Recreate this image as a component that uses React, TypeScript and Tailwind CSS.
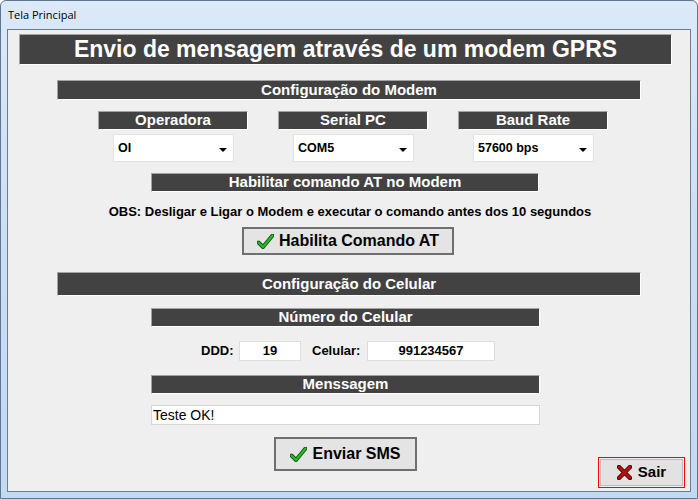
import React from 'react';

const font = "font-['Liberation_Sans',Arial,sans-serif]";

function Bar({ className, children }: { className: string; children: React.ReactNode }) {
  return (
    <div
      className={`flex items-center justify-center bg-[#424242] border-t border-l border-[#a3a3a3] border-b-white border-r-white border-b border-r text-white font-bold ${className}`}
    >
      {children}
    </div>
  );
}

function Check() {
  return (
    <svg width="17" height="15" viewBox="0 0 17 15" className="shrink-0">
      <path d="M1.5 8.5 L6 13 L15.5 1.5" fill="none" stroke="#0d5e0d" strokeWidth="4" strokeLinecap="round" strokeLinejoin="round" />
      <path d="M1.5 8.5 L6 13 L15.5 1.5" fill="none" stroke="#2fb52f" strokeWidth="2" strokeLinecap="round" strokeLinejoin="round" />
    </svg>
  );
}

function Cross() {
  return (
    <svg width="15" height="15" viewBox="0 0 15 15" className="shrink-0">
      <path d="M2 2 L13 13 M13 2 L2 13" fill="none" stroke="#5a0000" strokeWidth="4.5" strokeLinecap="round" />
      <path d="M2 2 L13 13 M13 2 L2 13" fill="none" stroke="#b31010" strokeWidth="2.5" strokeLinecap="round" />
    </svg>
  );
}

function Combo({ value, className }: { value: string; className: string }) {
  return (
    <div className={`h-[28px] bg-white border border-[#e2e2e2] flex items-start justify-between pl-[4px] pr-[6px] pt-[4px] ${className}`}>
      <span className="text-[12.5px] font-bold text-black">{value}</span>
      <span className="mt-[9px] w-0 h-0 border-l-[4px] border-r-[4px] border-t-[4px] border-l-transparent border-r-transparent border-t-black" />
    </div>
  );
}

function Field({ value, className }: { value: string; className: string }) {
  return (
    <div className={`h-[20px] bg-white border border-[#dedede] flex items-center justify-center text-[13px] font-bold text-black ${className}`}>
      {value}
    </div>
  );
}

export default function App() {
  return (
    <div className={`w-[698px] h-[499px] flex flex-col border border-[#5f7592] rounded-t-[6px] bg-gradient-to-b from-[#dbe9f8] via-[#c9def4] to-[#c2d9f2] ${font}`}>
      <div className="h-[28px] flex items-center pl-[7px] text-[11px] text-black font-['Open_Sans',sans-serif]">
        Tela Principal
      </div>
      <div className="flex-1 px-[6px] pb-[6px] flex">
        <div className="flex-1 border border-[#6b7d93] bg-[#efefef] flex flex-col items-start text-black">
          <Bar className="mt-[4px] ml-[11px] w-[653px] h-[31px] text-[23px]">
            Envio de mensagem através de um modem GPRS
          </Bar>

          <Bar className="mt-[15px] ml-[49px] w-[584px] h-[20px] text-[15px]">Configuração do Modem</Bar>

          <div className="mt-[11px] ml-[90px] flex gap-[30px]">
            {[
              ['Operadora', 'OI'],
              ['Serial PC', 'COM5'],
              ['Baud Rate', '57600 bps'],
            ].map(([label, value]) => (
              <div key={label} className="flex flex-col items-start">
                <Bar className="w-[150px] h-[19px] text-[15px]">{label}</Bar>
                <Combo value={value} className="mt-[4px] ml-[15px] w-[121px]" />
              </div>
            ))}
          </div>

          <Bar className="mt-[11px] ml-[143px] w-[388px] h-[19px] text-[15px]">Habilitar comando AT no Modem</Bar>

          <div className="mt-[12px] w-full h-[16px] flex items-center justify-center text-[13px] font-bold pl-[2px]">
            OBS: Desligar e Ligar o Modem e executar o comando antes dos 10 segundos
          </div>

          <button className="mt-[7px] ml-[234px] w-[212px] h-[28px] border-2 border-[#6f6f6f] bg-[#e4e4e4] flex items-center justify-center gap-[5px] text-[16px] font-bold">
            <Check />
            Habilita Comando AT
          </button>

          <Bar className="mt-[17px] ml-[49px] w-[584px] h-[24px] text-[15px]">Configuração do Celular</Bar>

          <Bar className="mt-[12px] ml-[143px] w-[389px] h-[19px] text-[15px]">Número do Celular</Bar>

          <div className="mt-[14px] ml-[193px] flex items-center text-[13px] font-bold">
            <span className="w-[38px]">DDD:</span>
            <Field value="19" className="w-[62px]" />
            <span className="ml-[11px] w-[55px]">Celular:</span>
            <Field value="991234567" className="w-[128px]" />
          </div>

          <Bar className="mt-[14px] ml-[143px] w-[389px] h-[19px] text-[15px]">Menssagem</Bar>

          <div className="mt-[11px] ml-[143px] w-[389px] h-[20px] bg-white border border-[#d6d6d6] flex items-center pl-[1px] text-[14px]">
            Teste OK!
          </div>

          <div className="mt-[12px] w-full flex items-start">
            <button className="ml-[266px] w-[143px] h-[34px] border-2 border-[#6f6f6f] bg-[#e4e4e4] flex items-center justify-center gap-[5px] text-[16px] font-bold">
              <Check />
              Enviar SMS
            </button>
            <div className="ml-auto mr-[5px] mt-[20px] w-[87px] h-[31px] border border-[#ff0000] p-[1px]">
              <button className="w-full h-full border border-[#bdbdbd] bg-[#e2e2e2] flex items-center justify-center gap-[6px] text-[15px] font-bold">
                <Cross />
                Sair
              </button>
            </div>
          </div>
        </div>
      </div>
    </div>
  );
}
